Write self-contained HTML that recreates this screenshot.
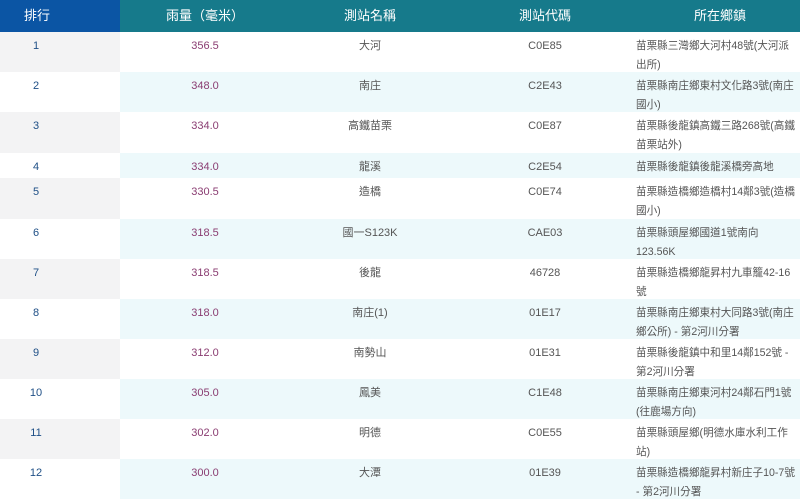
<!DOCTYPE html>
<html><head><meta charset="utf-8"><style>
*{margin:0;padding:0;box-sizing:border-box}
body{width:800px;height:499px;overflow:hidden;background:#fff;font-family:"Liberation Sans","Noto Sans CJK TC",sans-serif;font-size:11px;color:#555}
.h{position:absolute;top:0;height:32px;background:#167a8b;color:#fff;font-size:13px;line-height:32px;text-align:center}
.r{position:absolute;left:0;width:800px}
.r div{position:absolute;top:0;height:100%;padding-top:5px;line-height:19px}
.a{left:0;text-align:center;color:#1e4f86;width:72px}
.bg{position:absolute;left:0;top:0;width:120px;height:100%}
.b{left:120px;width:170px;text-align:center;color:#8a3d72}
.c{left:290px;width:160px;text-align:center}
.d{left:450px;width:190px;text-align:center}
.e{left:636px;width:164px;font-size:10.6px;white-space:nowrap}
.odd{background:#fff}.odd .bg{background:#f3f3f4}
.even{background:#edf9fb}.even .bg{background:#fff}
</style></head><body>
<div class="h" style="left:0;width:120px;background:#0b55a4;text-align:left;padding-left:24px">排行</div>
<div class="h" style="left:120px;width:170px">雨量（毫米）</div>
<div class="h" style="left:290px;width:160px">測站名稱</div>
<div class="h" style="left:450px;width:190px">測站代碼</div>
<div class="h" style="left:640px;width:160px">所在鄉鎮</div>

<div class="r odd" style="top:32px;height:40px"><span class="bg"></span><div class="a">1</div><div class="b">356.5</div><div class="c">大河</div><div class="d">C0E85</div><div class="e">苗栗縣三灣鄉大河村48號(大河派<br>出所)</div></div>
<div class="r even" style="top:72px;height:40px"><span class="bg"></span><div class="a">2</div><div class="b">348.0</div><div class="c">南庄</div><div class="d">C2E43</div><div class="e">苗栗縣南庄鄉東村文化路3號(南庄<br>國小)</div></div>
<div class="r odd" style="top:112px;height:41px"><span class="bg"></span><div class="a">3</div><div class="b">334.0</div><div class="c">高鐵苗栗</div><div class="d">C0E87</div><div class="e">苗栗縣後龍鎮高鐵三路268號(高鐵<br>苗栗站外)</div></div>
<div class="r even" style="top:153px;height:25px"><span class="bg"></span><div class="a">4</div><div class="b">334.0</div><div class="c">龍溪</div><div class="d">C2E54</div><div class="e">苗栗縣後龍鎮後龍溪橋旁高地</div></div>
<div class="r odd" style="top:178px;height:41px"><span class="bg"></span><div class="a">5</div><div class="b">330.5</div><div class="c">造橋</div><div class="d">C0E74</div><div class="e">苗栗縣造橋鄉造橋村14鄰3號(造橋<br>國小)</div></div>
<div class="r even" style="top:219px;height:40px"><span class="bg"></span><div class="a">6</div><div class="b">318.5</div><div class="c">國一S123K</div><div class="d">CAE03</div><div class="e">苗栗縣頭屋鄉國道1號南向<br>123.56K</div></div>
<div class="r odd" style="top:259px;height:40px"><span class="bg"></span><div class="a">7</div><div class="b">318.5</div><div class="c">後龍</div><div class="d">46728</div><div class="e">苗栗縣造橋鄉龍昇村九車籠42-16<br>號</div></div>
<div class="r even" style="top:299px;height:40px"><span class="bg"></span><div class="a">8</div><div class="b">318.0</div><div class="c">南庄(1)</div><div class="d">01E17</div><div class="e">苗栗縣南庄鄉東村大同路3號(南庄<br>鄉公所) - 第2河川分署</div></div>
<div class="r odd" style="top:339px;height:40px"><span class="bg"></span><div class="a">9</div><div class="b">312.0</div><div class="c">南勢山</div><div class="d">01E31</div><div class="e">苗栗縣後龍鎮中和里14鄰152號 -<br>第2河川分署</div></div>
<div class="r even" style="top:379px;height:40px"><span class="bg"></span><div class="a">10</div><div class="b">305.0</div><div class="c">鳳美</div><div class="d">C1E48</div><div class="e">苗栗縣南庄鄉東河村24鄰石門1號<br>(往鹿場方向)</div></div>
<div class="r odd" style="top:419px;height:40px"><span class="bg"></span><div class="a">11</div><div class="b">302.0</div><div class="c">明德</div><div class="d">C0E55</div><div class="e">苗栗縣頭屋鄉(明德水庫水利工作<br>站)</div></div>
<div class="r even" style="top:459px;height:40px"><span class="bg"></span><div class="a">12</div><div class="b">300.0</div><div class="c">大潭</div><div class="d">01E39</div><div class="e">苗栗縣造橋鄉龍昇村新庄子10-7號<br>- 第2河川分署</div></div>
</body></html>
